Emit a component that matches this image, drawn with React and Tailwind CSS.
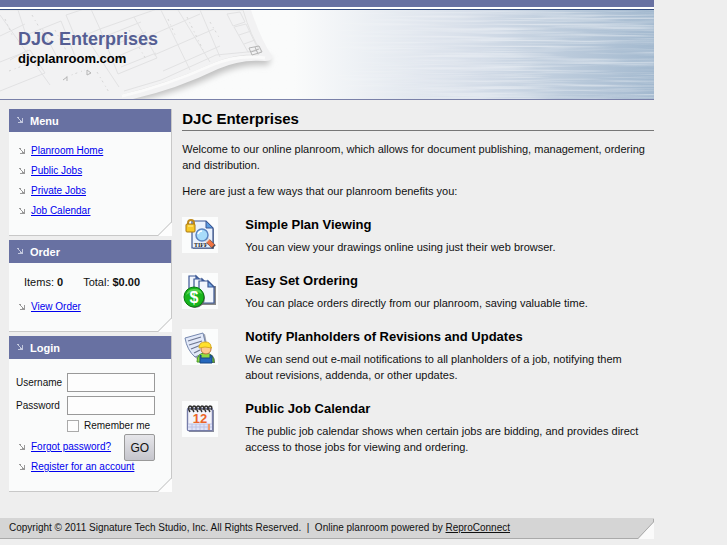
import React from 'react';

const menuLinks = ['Planroom Home', 'Public Jobs', 'Private Jobs', 'Job Calendar'];

const TiffIcon = () => (
    <svg width="36" height="36" viewBox="0 0 36 36" className="bg-[#fbfcfc]" aria-hidden="true">
        <path d="M11 5h14l7 7v20H11z" fill="#8c8f98" />
        <path d="M10 4h14l7 7v20H10z" fill="#eaf2fd" stroke="#3a5794" strokeWidth="1.2" />
        <path d="M24 4v7h7z" fill="#5b9be0" stroke="#3a5794" />
        <text x="12" y="30" fontSize="6" fontWeight="700" fill="#222" className="font-['Liberation_Serif',serif]">
            TIFF
        </text>
        <path d="M26 24l6 6" stroke="#4a4a55" strokeWidth="5" />
        <path d="M25 23l6 6" stroke="#ef7442" strokeWidth="4" />
        <path d="M24 22l2 2" stroke="#ddd" strokeWidth="4" />
        <circle cx="20" cy="18" r="6" fill="#a8dcfa" stroke="#5b84c0" strokeWidth="1.5" />
        <path d="M16 17q1-3 4-3" fill="none" stroke="#fff" strokeWidth="1.5" />
        <path d="M6 8V6q0-3 3-3t3 3v3" fill="none" stroke="#c08a1c" strokeWidth="2" />
        <rect x="4" y="7" width="9" height="8" rx="1" fill="#f8c928" stroke="#a97812" />
        <path d="M6 9h5" stroke="#fff09b" />
    </svg>
);

const OrderIcon = () => (
    <svg width="36" height="36" viewBox="0 0 36 36" className="bg-[#fbfcfc]" aria-hidden="true">
        <path d="M19 31h14V13" fill="none" stroke="#888" strokeWidth="2" />
        <g fill="#f2f6fd" stroke="#3b5794" strokeWidth="1.2">
            <path d="M7 3h7l5 5v18H7z" />
            <path d="M14 3v5h5z" fill="#78aee8" />
            <path d="M12 6h8l5 5v17H12z" />
            <path d="M20 6v5h5z" fill="#78aee8" />
            <path d="M17 8h9l6 6v16H17z" />
            <path d="M26 8v6h6z" fill="#78aee8" />
        </g>
        <circle cx="13" cy="25" r="10" fill="#666" />
        <circle cx="12" cy="24" r="10" fill="#18b51d" stroke="#087b12" />
        <path d="M4 22q2-7 9-6 6 0 7 5-8-5-16 1z" fill="#55d24f" />
        <text x="12" y="30" textAnchor="middle" fontSize="16" fontWeight="700" fill="#fff">
            $
        </text>
    </svg>
);

const NotifyIcon = () => (
    <svg width="36" height="36" viewBox="0 0 36 36" className="bg-[#fbfcfc]" aria-hidden="true">
        <path d="M5 10l18-5 4 20-12 5q-8-6-10-20z" fill="#a0a4ad" />
        <path d="M3 9l18-5q2 12 6 18l-14 6Q5 21 3 9z" fill="#e2e9f9" stroke="#7587ae" />
        <path d="M6 12l13-4M7 16l13-4M9 20l10-4M12 24l6-3" stroke="#6d7690" strokeWidth="1.3" />
        <path d="M18 34q-1-10 6-10 9 0 9 10z" fill="#666" />
        <path d="M15 33q0-9 8-9t9 9z" fill="#8edb40" stroke="#4c9b28" />
        <path d="M19 26v3h9v-3l2 1v7H18v-7z" fill="#2467bd" stroke="#164783" />
        <circle cx="24" cy="20" r="5" fill="#ffca90" stroke="#c07740" />
        <path d="M17 19q0-6 6-6t6 5l1 1-7-1z" fill="#ffe12b" stroke="#d8ac22" />
    </svg>
);

const CalendarIcon = () => (
    <svg width="36" height="36" viewBox="0 0 36 36" className="bg-[#fbfcfc]" aria-hidden="true">
        <path d="M7 9h25v22H7z" fill="#888c9c" />
        <rect x="5.5" y="7.5" width="25" height="22" rx="1" fill="#f3f3fb" stroke="#767da9" strokeWidth="1.4" />
        <path d="M6 23h24v6H6z" fill="#dfe3f8" />
        <path d="M6 23h24M6 26h24M10 23v6M14 23v6M18 23v6M22 23v6M26 23v6" stroke="#bcc3e4" />
        <path d="M27 23v6" stroke="#f09c70" strokeWidth="2" />
        {[8, 12, 16, 20, 24, 28].map((x) => (
            <path key={x} d={`M${x} 11q-3-5 0-6 3 0 1 4`} fill="none" stroke="#333" strokeWidth="1.5" />
        ))}
        <text x="18" y="22" textAnchor="middle" fontSize="13" fontWeight="700" fill="#eb6428">
            12
        </text>
    </svg>
);

const features = [
    {
        icon: TiffIcon,
        title: 'Simple Plan Viewing',
        text: 'You can view your drawings online using just their web browser.',
    },
    {
        icon: OrderIcon,
        title: 'Easy Set Ordering',
        text: 'You can place orders directly from our planroom, saving valuable time.',
    },
    {
        icon: NotifyIcon,
        title: 'Notify Planholders of Revisions and Updates',
        text: 'We can send out e-mail notifications to all planholders of a job, notifying them about revisions, addenda, or other updates.',
    },
    {
        icon: CalendarIcon,
        title: 'Public Job Calendar',
        text: 'The public job calendar shows when certain jobs are bidding, and provides direct access to those jobs for viewing and ordering.',
    },
];

const Arrow = ({ className }) => (
    <svg width="7" height="7" viewBox="0 0 7 7" className={className} fill="currentColor" aria-hidden="true">
        <path d="M0 0h2v1H0zM1 1h1v1H1zM2 2h1v1H2zM3 3h1v1H3zM4 4h1v1H4zM5 1h1v5H5zM1 5h5v1H1zM3 4h2v1H3z" />
    </svg>
);

const ArrowLink = ({ children }) => (
    <a href="#" className="flex items-center gap-[5px] text-[10px] leading-5 text-[#0000ee]">
        <Arrow className="shrink-0 text-[#999]" />
        <span className="underline">{children}</span>
    </a>
);

const Panel = ({ title, children }) => (
    <section className="relative border-r border-b border-[#c8c8c8] bg-[#fafbfb]">
        <h2 className="flex h-[23px] items-center gap-[6px] bg-[#6871a2] pl-2 text-[11px] font-bold text-white">
            <Arrow className="text-[#c3c8de]" />
            {title}
        </h2>
        {children}
        <svg width="14" height="14" viewBox="0 0 14 14" className="absolute -right-px -bottom-px" aria-hidden="true">
            <path d="M0 14L14 0v14z" fill="#fdfdfd" />
            <path d="M0 13.5L13.5 0" stroke="#bbb" />
        </svg>
    </section>
);

const BannerArt = () => (
    <>
        <svg className="absolute top-0 right-0 h-full w-[55%]" aria-hidden="true">
            <defs>
                <filter id="brushed" x="0" y="0" width="100%" height="100%">
                    <feTurbulence type="fractalNoise" baseFrequency="0.008 0.5" numOctaves="3" seed="4" />
                    <feColorMatrix values="0 0 0 0 1  0 0 0 0 1  0 0 0 0 1  3 0 0 0 -1.2" />
                </filter>
                <linearGradient id="fade">
                    <stop offset="0" stopColor="#000" />
                    <stop offset="0.6" stopColor="#fff" />
                </linearGradient>
                <mask id="fadeMask">
                    <rect width="100%" height="100%" fill="url(#fade)" />
                </mask>
            </defs>
            <g mask="url(#fadeMask)">
                <rect width="100%" height="100%" filter="url(#brushed)" opacity="0.4" />
            </g>
        </svg>
        <svg width="290" height="89" viewBox="0 0 290 89" className="absolute top-0 left-0" aria-hidden="true">
            <defs>
                <filter id="soft">
                    <feGaussianBlur stdDeviation="3" />
                </filter>
            </defs>
            <path d="M130 92Q180 82 218 64q25-11 50-9l3-7-30-12-120 50z" fill="#c0c0c0" filter="url(#soft)" />
            <path d="M0 0h251q10 30 21 46 1 5-7 5-25-2-47 8-41 20-85 30H0z" fill="#f2f2f3" />
            <path d="M0 0h243q8 27 18 41l-3 4q-24-1-46 9-42 19-90 31" fill="none" stroke="#e2e2e2" />
            <path d="M122 86q43-10 90-31 25-11 53-7" fill="none" stroke="#fafafa" strokeWidth="3" />
            <g fill="none" stroke="#e2e2e3">
                <path d="M0 5l50 70M18 0l8 25 35-14 16 40M66 5l24-8 10 22-24 10zM84 24l35 53M100 19l34-12 23 41-39 16zM106 26l35-14M111 36l35-14M116 47l35-15M121 57l35-14" />
                <path d="M134 7l26-9 30 62M145 28l55-24M154 45l60-26M163 61l57-25M178 0l32 52M200 0l20 47M0 52l30-12 15 23-45 18M42 18l18 35M0 26l25-12M10 50l18-10" />
                <path d="M227 4l13-2 5 10-12 4zM234 17l12-3 12 25-10 3zM239 25l12-4M244 34l11-4M124 81l37-11 55-25 42-4" />
            </g>
            <path
                d="M5 9l8 18M32 5l18 31M55 20l12 22M97 62l13 22M129 20l18 31M168 9l8 18M187 7l16 33M9 61l32-12M210 12l10 17M66 67l19-7"
                stroke="#d6d6d6"
                strokeDasharray="2 4 1 3"
            />
            <path d="M249 38l10-2 3 6-10 3zM251 42l8-3M255 37l3 7M63 70l4-3v4M87 60l4 3-4 2z" fill="none" stroke="#b5b5b5" />
        </svg>
    </>
);

/**
 * Planroom home page.
 * @returns {React.Component} The page with banner, side panels and feature list
 */
const App = () => {
    return (
        <div className="min-h-screen bg-[#eee] font-['Liberation_Sans',Arial,sans-serif] text-[11px] leading-4 text-[#111]">
            <div className="w-[90%]">
                <header>
                    <div className="h-[7px] bg-[#6871a2]" />
                    <div className="h-[2px] bg-white" />
                    <div className="relative h-[91px] border-t border-b border-t-[#354d80] border-b-[#7980a8] bg-linear-to-r from-[#fafbfb] from-45% via-[#dae1eb] via-70% to-[#a3b9cf]">
                        <BannerArt />
                        <div className="relative pt-[17px] pl-[18px]">
                            <h1 className="text-[18px] leading-6 font-bold text-[#555e93]">DJC Enterprises</h1>
                            <p className="text-[13px] leading-4 font-bold text-black">djcplanroom.com</p>
                        </div>
                    </div>
                </header>

                <div className="flex gap-[10px] pt-[9px] pl-[9px]">
                    <aside className="flex w-[25.3%] shrink-0 flex-col gap-1">
                        <Panel title="Menu">
                            <nav className="px-[10px] pt-[9px] pb-[14px]">
                                {menuLinks.map((label) => (
                                    <ArrowLink key={label}>{label}</ArrowLink>
                                ))}
                            </nav>
                        </Panel>
                        <Panel title="Order">
                            <div className="px-[10px] pt-[11px] pb-[14px]">
                                <p className="mb-[7px] flex gap-5 pl-[5px]">
                                    <span>
                                        Items: <b>0</b>
                                    </span>
                                    <span>
                                        Total: <b>$0.00</b>
                                    </span>
                                </p>
                                <ArrowLink>View Order</ArrowLink>
                            </div>
                        </Panel>
                        <Panel title="Login">
                            <form className="px-[10px] pt-[14px] pb-[14px] text-[10px]" onSubmit={(e) => e.preventDefault()}>
                                <div className="-ml-[3px] grid grid-cols-[51px_88px] items-center gap-y-1">
                                    <label htmlFor="username">Username</label>
                                    <input id="username" type="text" className="h-[19px] min-w-0 border border-[#999] bg-[#fdfdfd] px-1" />
                                    <label htmlFor="password">Password</label>
                                    <input id="password" type="password" className="h-[19px] min-w-0 border border-[#999] bg-[#fdfdfd] px-1" />
                                    <div className="col-start-2 flex h-[14px] items-center gap-[5px]">
                                        <input
                                            id="remember"
                                            type="checkbox"
                                            className="size-3 shrink-0 appearance-none border border-[#aaa] bg-[#fdfdfd] checked:bg-[#6871a2]"
                                        />
                                        <label htmlFor="remember" className="whitespace-nowrap">
                                            Remember me
                                        </label>
                                    </div>
                                </div>
                                <div className="grid grid-cols-[1fr_auto] items-start pt-px pr-[6px]">
                                    <div className="min-w-0 pt-[3px] whitespace-nowrap">
                                        <ArrowLink>Forgot password?</ArrowLink>
                                        <ArrowLink>Register for an account</ArrowLink>
                                    </div>
                                    <button
                                        type="submit"
                                        className="h-[27px] w-[31px] rounded-xs border border-[#999] bg-linear-to-b from-[#e6e6ea] to-[#c5c5cc] text-xs"
                                    >
                                        GO
                                    </button>
                                </div>
                            </form>
                        </Panel>
                    </aside>

                    <main className="min-w-0 flex-1">
                        <h2 className="mb-[10px] border-b border-[#777] pb-px text-[15px] leading-5 font-bold text-black">
                            DJC Enterprises
                        </h2>
                        <p className="mb-[10px]">
                            Welcome to our online planroom, which allows for document publishing, management, ordering and
                            distribution.
                        </p>
                        <p>Here are just a few ways that our planroom benefits you:</p>
                        <ul className="flex flex-col gap-[18px] pt-[18px]">
                            {features.map(({ icon: Icon, title, text }) => (
                                <li key={title} className="flex gap-[27px] pr-1">
                                    <div className="shrink-0">
                                        <Icon />
                                    </div>
                                    <div>
                                        <h3 className="mb-[6px] text-[13px] leading-4 font-bold text-black">{title}</h3>
                                        <p>{text}</p>
                                    </div>
                                </li>
                            ))}
                        </ul>
                    </main>
                </div>

                <footer className="relative mt-[26px] h-[21px] border-b border-[#aaa] bg-[#d5d5d5] pl-[9px] text-[10px] leading-5">
                    Copyright © 2011 Signature Tech Studio, Inc. All Rights Reserved. &nbsp;|&nbsp; Online planroom powered by{' '}
                    <a href="#" className="underline">
                        ReproConnect
                    </a>
                    <svg width="16" height="20" viewBox="0 0 16 20" className="absolute right-0 -bottom-px" aria-hidden="true">
                        <path d="M0 20L16 3v17z" fill="#fafafa" />
                        <path d="M0 19.5L15.5 3V0" fill="none" stroke="#aaa" />
                    </svg>
                </footer>
            </div>
        </div>
    );
};
export default App;
